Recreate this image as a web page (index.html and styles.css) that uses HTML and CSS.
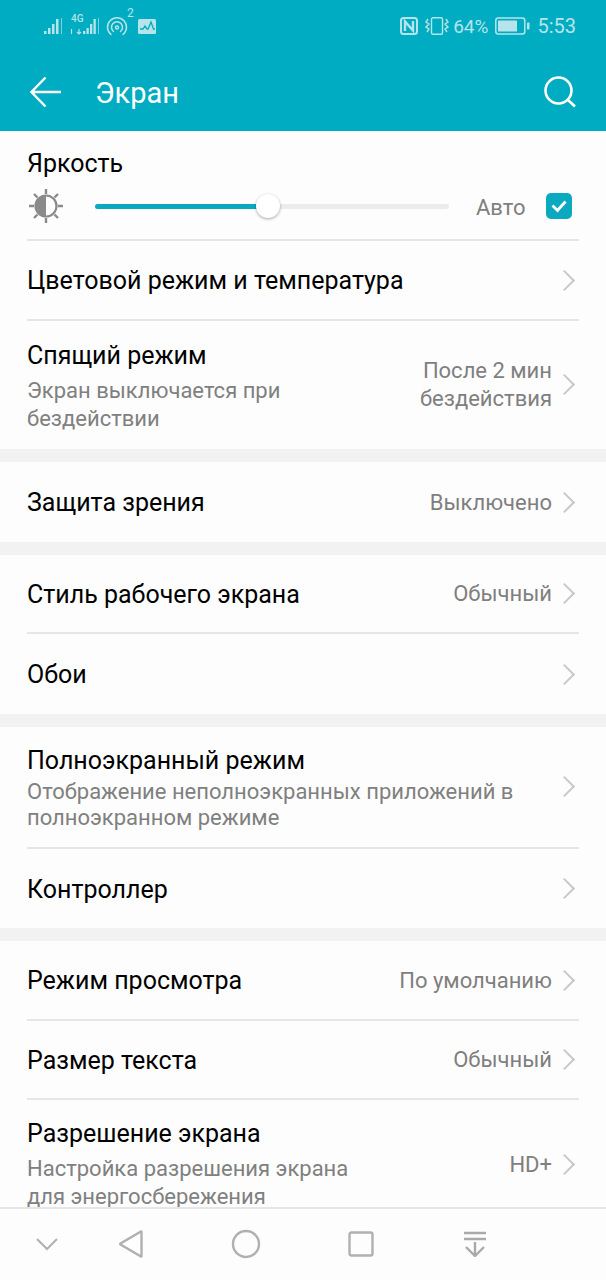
FILE: index.html
```html
<!DOCTYPE html>
<html lang="ru">
<head>
    <meta charset="UTF-8">
    <meta name="viewport" content="width=device-width, initial-scale=1.0">
    <title>Экран</title>
    <link rel="stylesheet" href="styles.css">
</head>
<body>
    <div class="phone">
        <header class="topbar">
            <div class="status">
                <div class="status-left">
                    <svg width="19" height="20" viewBox="0 0 19 20" fill="none">
                        <g fill="#b5e4ea">
                            <rect x="0" y="15" width="2.500" height="3"/><rect x="4" y="12" width="2.500" height="6"/><rect x="8" y="8" width="2.500" height="10"/><rect x="12" y="3" width="2.500" height="15"/>
                        </g>
                        <rect x="17" y="2" width="1" height="16" fill="#7fd0da"/>
                    </svg>
                    <div class="st-net">
                        <span class="st-4g">4G</span>
                        <svg width="29" height="20" viewBox="0 0 29 20" fill="none">
                            <path d="M1.500 13v5M9 13v5M7 16l2 2 2-2" stroke="#b5e4ea" stroke-width="1.200"/>
                            <g fill="#b5e4ea">
                                <rect x="13" y="15" width="2.300" height="3"/><rect x="16.500" y="12" width="2.300" height="6"/><rect x="20" y="8" width="2.300" height="10"/><rect x="23.500" y="3" width="2.300" height="15"/>
                            </g>
                            <rect x="28" y="2" width="1" height="16" fill="#7fd0da"/>
                        </svg>
                    </div>
                    <svg width="22" height="20" viewBox="0 0 22 20" fill="none" stroke="#b5e4ea" stroke-width="1.500" stroke-linecap="round">
                        <path d="M5 18.500A9.500 9.500 0 1 1 17 18.500"/>
                        <path d="M7.500 15.500A5.500 5.500 0 1 1 14.500 15.500"/>
                        <circle cx="11" cy="11.500" r="1.500"/>
                    </svg>
                    <span class="st-two">2</span>
                    <svg class="st-graph" width="18" height="15" viewBox="0 0 18 15" fill="none">
                        <rect width="18" height="15" rx="1.500" fill="#b5e4ea"/>
                        <path d="M2 10h3l2-3 2 3h1l3-7 2.500 7H17" stroke="#00acc1" stroke-width="1.300"/>
                    </svg>
                </div>
                <div class="status-right">
                    <svg width="18" height="18" viewBox="0 0 18 18" fill="none" stroke="#b5e4ea">
                        <rect x="1" y="1" width="16" height="16" rx="2.500" stroke-width="2"/>
                        <path d="M5 14V4.500l8 9V4" stroke-width="2.400"/>
                    </svg>
                    <svg class="st-vib" width="24" height="18" viewBox="0 0 24 18" fill="none" stroke="#b5e4ea" stroke-width="1.400">
                        <rect x="6.500" y="0.800" width="11" height="16.400" rx="1.500"/>
                        <path d="M3 2 1 5l3 2-3 3 3 2-2 3M21 2l2 3-3 2 3 3-3 2 2 3"/>
                    </svg>
                    <span class="st-text st-pct">64%</span>
                    <svg class="st-batt" width="35" height="18" viewBox="0 0 35 18" fill="none">
                        <rect x="0.800" y="1" width="29" height="16" rx="2.500" stroke="#b5e4ea" stroke-width="1.500"/>
                        <rect x="3" y="3.500" width="19" height="11" rx="0.500" fill="#b5e4ea"/>
                        <rect x="32" y="5.500" width="2.500" height="7" rx="0.800" fill="#b5e4ea"/>
                    </svg>
                    <span class="st-text">5:53</span>
                </div>
            </div>
            <div class="titlebar">
                <svg class="back" width="32" height="32" viewBox="0 0 32 32" fill="none"><path d="M31 16H2M15.500 1.500 1.500 16l14 14.500" stroke="#fff" stroke-width="2.400"/></svg>
                <h1 class="title">Экран</h1>
                <svg class="search" width="32" height="32" viewBox="0 0 32 32" fill="none"><circle cx="14.500" cy="14.500" r="13" stroke="#fff" stroke-width="2.600"/><path d="m24 24 7 6.500" stroke="#fff" stroke-width="2.600"/></svg>
            </div>
        </header>

        <main class="list">
            <section class="group">
                <div class="brightness">
                    <div class="row-title">Яркость</div>
                    <div class="slider-row">
                        <svg class="sun" width="36" height="36" viewBox="0 0 36 36" fill="none">
                            <circle cx="18" cy="18" r="10.500" stroke="#8a8a8a" stroke-width="2.200"/>
                            <path d="M18 7.500a10.500 10.500 0 0 0 0 21z" fill="#8a8a8a"/>
                            <path d="M18 1v5M18 30v5M1 18h5M30 18h5M6 6l3.500 3.500M26.500 26.500 30 30M6 30l3.500-3.500M26.500 9.500 30 6" stroke="#8a8a8a" stroke-width="2.400"/>
                        </svg>
                        <div class="slider">
                            <div class="slider-fill"></div>
                            <div class="slider-thumb"></div>
                        </div>
                        <span class="auto">Авто</span>
                        <span class="check">
                            <svg width="16" height="14" viewBox="0 0 16 14" fill="none"><path d="m1.500 6.500 5 5 8-9" stroke="#fff" stroke-width="2.800"/></svg>
                        </span>
                    </div>
                </div>
                <div class="row row-one"><span class="row-title">Цветовой режим и температура</span><span class="chev"></span></div>
                <div class="row row-sleep">
                    <div class="row-main">
                        <div class="row-title">Спящий режим</div>
                        <div class="row-sub sub-narrow">Экран выключается при бездействии</div>
                    </div>
                    <div class="row-value value-two">После 2 мин бездействия</div>
                    <span class="chev"></span>
                </div>
            </section>

            <section class="group">
                <div class="row row-one"><span class="row-title">Защита зрения</span><span class="row-value">Выключено</span><span class="chev"></span></div>
            </section>

            <section class="group">
                <div class="row row-one"><span class="row-title">Стиль рабочего экрана</span><span class="row-value">Обычный</span><span class="chev"></span></div>
                <div class="row row-one"><span class="row-title">Обои</span><span class="chev"></span></div>
            </section>

            <section class="group">
                <div class="row row-full">
                    <div class="row-main">
                        <div class="row-title">Полноэкранный режим</div>
                        <div class="row-sub">Отображение неполноэкранных приложений в полноэкранном режиме</div>
                    </div>
                    <span class="chev"></span>
                </div>
                <div class="row row-one"><span class="row-title">Контроллер</span><span class="chev"></span></div>
            </section>

            <section class="group">
                <div class="row row-one"><span class="row-title">Режим просмотра</span><span class="row-value">По умолчанию</span><span class="chev"></span></div>
                <div class="row row-one"><span class="row-title">Размер текста</span><span class="row-value">Обычный</span><span class="chev"></span></div>
                <div class="row row-res">
                    <div class="row-main">
                        <div class="row-title">Разрешение экрана</div>
                        <div class="row-sub sub-res">Настройка разрешения экрана для энергосбережения</div>
                    </div>
                    <span class="row-value">HD+</span>
                    <span class="chev"></span>
                </div>
            </section>
        </main>

        <nav class="navbar">
            <svg class="nav-down" width="24" height="14" viewBox="0 0 24 14" fill="none"><path d="m2 2 10 10L22 2" stroke="#b0b0b0" stroke-width="2"/></svg>
            <svg class="nav-icon" width="26" height="30" viewBox="0 0 26 30" fill="none"><path d="M23.500 3v24q0 1-1 .3L2.500 15.500q-.6-.5 0-1L22.500 2.700q1-.7 1 .3z" stroke="#b0b0b0" stroke-width="2.400"/></svg>
            <svg class="nav-icon" width="30" height="30" viewBox="0 0 30 30" fill="none"><circle cx="15" cy="15" r="13" stroke="#b0b0b0" stroke-width="2.400"/></svg>
            <svg class="nav-icon nav-square" width="26" height="26" viewBox="0 0 26 26" fill="none"><rect x="1.500" y="1.500" width="23" height="23" rx="2" stroke="#b0b0b0" stroke-width="2.400"/></svg>
            <svg class="nav-icon" width="24" height="26" viewBox="0 0 24 26" fill="none"><path d="M1 2h22M1 8h22M12 11v14M3 16l9 9 9-9" stroke="#aaa" stroke-width="2.400"/></svg>
        </nav>
    </div>
</body>
</html>
```

FILE: styles.css
```css
* { box-sizing: border-box; }
html, body { margin: 0; padding: 0; }
body {
    font-family: "Roboto", "Noto Sans", sans-serif;
    background: #fdfdfd;
    color: #000;
}
.phone {
    width: 606px;
    height: 1280px;
    display: flex;
    flex-direction: column;
    overflow: hidden;
}

.topbar { background: #00acc1; height: 131px; flex: none; color: #fff; }
.status {
    height: 52px;
    display: flex;
    justify-content: space-between;
    align-items: center;
    padding: 0 30px 0 44px;
}
.status-left { display: flex; align-items: center; gap: 7px; position: relative; }
.st-net { position: relative; }
.st-net svg { display: block; }
.st-4g { position: absolute; left: 1px; top: -3px; font-size: 10px; line-height: 12px; font-weight: 500; color: #b5e4ea; }
.st-two { position: absolute; left: 83px; top: -9px; font-size: 12px; line-height: 12px; color: #b5e4ea; }
.st-graph { margin-left: 3px; }
.status-right { display: flex; align-items: center; }
.st-vib { margin-left: 7px; }
.st-batt { margin: 0 7px; }
.st-text { font-size: 20px; color: #b5e4ea; }
.st-text.st-pct { font-size: 19px; margin-left: 4px; }
.titlebar {
    height: 79px;
    display: flex;
    align-items: center;
    padding: 0 30px 0 30px;
}
.title { font-size: 29px; font-weight: 400; margin: 2px 0 0 33px; flex: 1; }

.list { flex: 1; overflow: hidden; background: #f2f2f2; }
.group { background: #fdfdfd; margin-bottom: 13px; padding: 0 27px; }

.brightness { height: 110px; border-bottom: 2px solid #e6e6e6; padding-top: 19px; }
.brightness .row-title { line-height: 28px; }
.slider-row { display: flex; align-items: center; height: 36px; margin-top: 10px; }
.sun { flex: none; margin-left: 1px; }
.slider { position: relative; width: 354px; height: 5px; background: #ececec; border-radius: 3px; margin-left: 31px; }
.slider-fill { width: 173px; height: 5px; background: #0ba9c0; border-radius: 3px; }
.slider-thumb {
    position: absolute;
    left: 161px;
    top: -10px;
    width: 24px;
    height: 24px;
    border-radius: 50%;
    background: #fff;
    box-shadow: 0 1px 3px rgba(0, 0, 0, 0.35);
}
.auto { font-size: 22px; color: #7f7f7f; margin: 2px 0 0 27px; }
.check {
    width: 26px;
    height: 26px;
    border-radius: 5px;
    background: #0ba9c0;
    margin-left: 21px;
    display: flex;
    align-items: center;
    justify-content: center;
}

.row { display: flex; align-items: center; border-bottom: 2px solid #e6e6e6; }
.group .row:last-child { border-bottom: none; }
.row-one { height: 79.5px; padding-top: 1px; }
.row-one .row-title { margin-top: 2px; }
.row-sleep { height: 128.5px; }
.row-sleep .row-main { margin-top: 4px; }
.row-full { height: 122px; padding-top: 3px; }
.row-full .chev { margin-top: -4px; }
.row-res { height: 110px; padding-top: 18px; }
.row-main { flex: 1; min-width: 0; }
.row-title { font-size: 25px; line-height: 32px; color: #000; flex: 1; }
.row-sub { font-size: 22px; line-height: 28px; color: #808080; margin-top: 5px; }
.row-full .row-sub { line-height: 26px; margin-top: 3px; }
.row-full .row-title { margin-bottom: -1px; }
.sub-narrow { width: 290px; }
.sub-res { width: 340px; }
.row-value { font-size: 22px; color: #7f7f7f; white-space: nowrap; }
.value-two { white-space: normal; text-align: right; width: 150px; line-height: 28px; }
.chev {
    width: 15px;
    height: 15px;
    border-top: 2px solid #c8c8c8;
    border-right: 2px solid #c8c8c8;
    transform: rotate(45deg);
    flex: none;
    margin: 0 7px 0 5px;
}

.navbar {
    height: 73px;
    flex: none;
    background: #fdfdfd;
    border-top: 2px solid #e6e6e6;
    display: flex;
    align-items: center;
    padding: 0 0 2px 35px;
}
.nav-down { margin-right: 59px; }
.nav-icon { margin-right: 87px; }
.nav-icon.nav-square { margin-right: 89px; }
```
